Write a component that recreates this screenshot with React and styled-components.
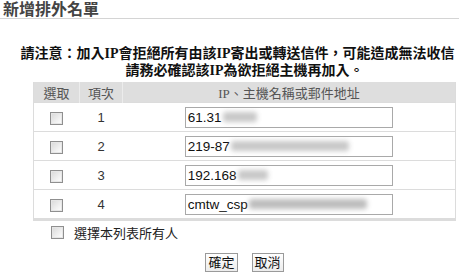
import React from 'react';
import styled, { createGlobalStyle } from 'styled-components';

const GlobalStyle = createGlobalStyle`
  body {
    margin: 0;
    background: #fff;
    font-family: "Liberation Sans", Arial, "Noto Sans CJK TC", sans-serif;
    font-size: 13px;
    color: #222;
  }
`;

const Page = styled.div`
  width: 459px;
  height: 273px;
  overflow: hidden;
`;

const Title = styled.h2`
  margin: 0;
  padding: 1px 0 0 3px;
  height: 17px;
  line-height: 17px;
  font-size: 16px;
  font-weight: bold;
  color: #444;
  border-bottom: 1px solid #d4d4d4;
`;

const Content = styled.div`
  margin-left: 30px;
  width: 429px;
  display: flex;
  flex-direction: column;
  align-items: center;
`;

const Notice = styled.div`
  margin-top: 26px;
  display: flex;
  flex-direction: column;
  align-items: center;
  font-size: 14px;
  font-weight: bold;
  line-height: 16px;
  color: #111;
  white-space: nowrap;
`;

const Ip = styled.span`
  font-family: "Liberation Serif", "Times New Roman", serif;
`;

const Table = styled.table`
  margin-top: 3px;
  width: 423px;
  border-collapse: collapse;
  border-left: 1px solid #dcdcdc;
  border-right: 1px solid #dcdcdc;
  border-bottom: 3px solid #dcdcdc;
`;

const HeadCell = styled.th`
  height: 20px;
  padding: 0;
  background: #dedede;
  border-left: 1px solid #ececec;
  font-weight: normal;
  font-size: 13px;
  color: #555;
  text-align: center;
  width: ${(p) => p.w || 'auto'};
  &:first-child {
    border-left: none;
  }
`;

const Cell = styled.td`
  height: 28px;
  padding: 0;
  text-align: center;
  border-top: 1px solid #dcdcdc;
  color: #333;
`;

const Box = styled.input.attrs({ type: 'checkbox' })`
  appearance: none;
  margin: 0;
  width: 13px;
  height: 13px;
  border: 1px solid #8f8f8f;
  background: linear-gradient(135deg, #d8d8d8 0%, #f4f4f4 70%, #ffffff 100%);
  box-shadow: inset 0 0 0 1px #e6e6e6;
  vertical-align: middle;
`;

const Field = styled.div`
  display: inline-flex;
  align-items: center;
  box-sizing: border-box;
  width: 208px;
  height: 21px;
  padding: 0 2px;
  border: 1px solid #a9a9a9;
  background: #fff;
  font-size: 13.5px;
  color: #111;
  text-align: left;
  vertical-align: middle;
  overflow: hidden;
  white-space: nowrap;
`;

const Blur = styled.span`
  display: inline-block;
  width: ${(p) => p.w}px;
  height: 10px;
  margin-left: 1px;
  border-radius: 3px;
  background: ${(p) => p.tone || '#c8c8c8'};
  filter: blur(2.5px);
`;

const SelectAll = styled.label`
  align-self: flex-start;
  display: flex;
  align-items: center;
  gap: 10px;
  margin: 3px 0 0 21px;
  height: 16px;
  font-size: 13px;
  color: #222;
`;

const Actions = styled.div`
  display: flex;
  gap: 14px;
  margin-top: 13px;
`;

const Button = styled.button`
  box-sizing: border-box;
  height: 19px;
  padding: 0 2px;
  border: 1px solid #9a9a9a;
  background: linear-gradient(#ffffff, #ececec);
  font-family: inherit;
  font-size: 13px;
  line-height: 15px;
  color: #111;
`;

const rows = [
  { no: 1, value: '61.31', blur: [{ w: 34 }] },
  { no: 2, value: '219-87', blur: [{ w: 118 }] },
  { no: 3, value: '192.168', blur: [{ w: 30 }] },
  { no: 4, value: 'cmtw_csp', blur: [{ w: 118, tone: '#bdbdbd' }] },
];

function App() {
  return (
    <Page>
      <GlobalStyle />
      <Title>新增排外名單</Title>
      <Content>
        <Notice>
          <div>
            請注意：加入<Ip>IP</Ip>會拒絕所有由該<Ip>IP</Ip>寄出或轉送信件，可能造成無法收信，
          </div>
          <div>
            請務必確認該<Ip>IP</Ip>為欲拒絕主機再加入。
          </div>
        </Notice>
        <Table>
          <thead>
            <tr>
              <HeadCell w="45px">選取</HeadCell>
              <HeadCell w="42px">項次</HeadCell>
              <HeadCell>
                <Ip>IP</Ip>、主機名稱或郵件地址
              </HeadCell>
            </tr>
          </thead>
          <tbody>
            {rows.map((r) => (
              <tr key={r.no}>
                <Cell>
                  <Box />
                </Cell>
                <Cell>{r.no}</Cell>
                <Cell>
                  <Field>
                    {r.value}
                    {r.blur.map((b, i) => (
                      <Blur key={i} w={b.w} tone={b.tone} />
                    ))}
                  </Field>
                </Cell>
              </tr>
            ))}
          </tbody>
        </Table>
        <SelectAll>
          <Box />
          選擇本列表所有人
        </SelectAll>
        <Actions>
          <Button>確定</Button>
          <Button>取消</Button>
        </Actions>
      </Content>
    </Page>
  );
}

export default App;
